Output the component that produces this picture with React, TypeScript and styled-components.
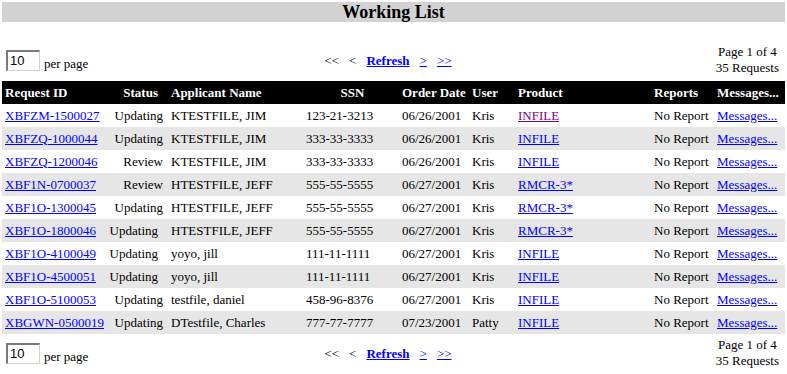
import React from "react";
import styled, { createGlobalStyle } from "styled-components";

const GlobalStyle = createGlobalStyle`
  html, body { margin: 0; padding: 0; background: #fff; }
  body {
    font-family: "Liberation Serif", "Times New Roman", serif;
    font-size: 13px;
    color: #000;
  }
`;

const Page = styled.div`
  padding: 2px 2px 0 2px;
`;

const TitleBar = styled.h1`
  margin: 0;
  height: 20px;
  line-height: 20px;
  background: #d3d3d3;
  text-align: center;
  font-size: 18px;
  font-weight: bold;
`;

const Controls = styled.div<{ $top?: boolean }>`
  box-sizing: border-box;
  display: grid;
  grid-template-columns: 1fr auto 1fr;
  align-items: center;
  height: 38px;
  padding-bottom: 4px;
  margin-top: ${(p) => (p.$top ? "21px" : "2px")};
`;

const PerPage = styled.div`
  display: flex;
  align-items: flex-end;
  gap: 4px;
  padding-left: 4px;
`;

const PerPageLabel = styled.span`
  line-height: 15px;
`;

const PageInput = styled.input`
  box-sizing: border-box;
  width: 34px;
  height: 21px;
  padding: 0 2px;
  margin: 0;
  border-style: solid;
  border-width: 2px 1px 1px 2px;
  border-color: #7a7a7a #d4d0c8 #d4d0c8 #7a7a7a;
  font-family: "Liberation Sans", Arial, sans-serif;
  font-size: 13px;
  color: #000;
  background: #fff;
`;

const Pager = styled.div`
  display: flex;
  align-items: baseline;
  gap: 10px;
  margin-right: 11px;
  padding-top: 2px;
`;

const PagerText = styled.span``;

const PagerLink = styled.a<{ $bold?: boolean }>`
  color: #0000ff;
  text-decoration: underline;
  font-weight: ${(p) => (p.$bold ? "bold" : "normal")};
  cursor: pointer;
`;

const PageInfo = styled.div`
  justify-self: end;
  text-align: center;
  line-height: 16px;
  padding-right: 6px;
`;

const Table = styled.div`
  display: flex;
  flex-direction: column;
`;

const cols = "104px 62px 135px 96px 70px 46px 136px 63px 71px";

const HeaderRow = styled.div`
  display: grid;
  grid-template-columns: ${cols};
  height: 23px;
  align-items: center;
  background: #000;
  color: #fff;
  font-weight: bold;
`;

const Row = styled.div<{ $shade: boolean }>`
  display: grid;
  grid-template-columns: ${cols};
  height: 23px;
  align-items: center;
  background: ${(p) => (p.$shade ? "#e6e6e6" : "#fff")};
`;

const Cell = styled.div<{ $align?: "left" | "right" | "center"; $padRight?: number; $padLeft?: number }>`
  white-space: nowrap;
  overflow: visible;
  text-align: ${(p) => p.$align || "left"};
  padding-left: ${(p) => (p.$padLeft ?? 3)}px;
  padding-right: ${(p) => (p.$padRight ?? 0)}px;
`;

const Link = styled.a<{ $visited?: boolean }>`
  color: ${(p) => (p.$visited ? "#800080" : "#0000ff")};
  text-decoration: underline;
  cursor: pointer;
`;

type Req = {
  id: string;
  status: string;
  statusPad: number;
  name: string;
  ssn: string;
  date: string;
  user: string;
  product: string;
  visited?: boolean;
};

const rows: Req[] = [
  { id: "XBFZM-1500027", status: "Updating", statusPad: 5, name: "KTESTFILE, JIM", ssn: "123-21-3213", date: "06/26/2001", user: "Kris", product: "INFILE", visited: true },
  { id: "XBFZQ-1000044", status: "Updating", statusPad: 5, name: "KTESTFILE, JIM", ssn: "333-33-3333", date: "06/26/2001", user: "Kris", product: "INFILE" },
  { id: "XBFZQ-1200046", status: "Review", statusPad: 5, name: "KTESTFILE, JIM", ssn: "333-33-3333", date: "06/26/2001", user: "Kris", product: "INFILE" },
  { id: "XBF1N-0700037", status: "Review", statusPad: 5, name: "HTESTFILE, JEFF", ssn: "555-55-5555", date: "06/27/2001", user: "Kris", product: "RMCR-3*" },
  { id: "XBF1O-1300045", status: "Updating", statusPad: 5, name: "HTESTFILE, JEFF", ssn: "555-55-5555", date: "06/27/2001", user: "Kris", product: "RMCR-3*" },
  { id: "XBF1O-1800046", status: "Updating", statusPad: 10, name: "HTESTFILE, JEFF", ssn: "555-55-5555", date: "06/27/2001", user: "Kris", product: "RMCR-3*" },
  { id: "XBF1O-4100049", status: "Updating", statusPad: 10, name: "yoyo, jill", ssn: "111-11-1111", date: "06/27/2001", user: "Kris", product: "INFILE" },
  { id: "XBF1O-4500051", status: "Updating", statusPad: 10, name: "yoyo, jill", ssn: "111-11-1111", date: "06/27/2001", user: "Kris", product: "INFILE" },
  { id: "XBF1O-5100053", status: "Updating", statusPad: 5, name: "testfile, daniel", ssn: "458-96-8376", date: "06/27/2001", user: "Kris", product: "INFILE" },
  { id: "XBGWN-0500019", status: "Updating", statusPad: 5, name: "DTestfile, Charles", ssn: "777-77-7777", date: "07/23/2001", user: "Patty", product: "INFILE" },
];

const ControlBar: React.FC<{ top?: boolean }> = ({ top }) => (
  <Controls $top={top}>
    <PerPage>
      <PageInput type="text" defaultValue="10" />
      <PerPageLabel>per page</PerPageLabel>
    </PerPage>
    <Pager>
      <PagerText>&lt;&lt;</PagerText>
      <PagerText>&lt;</PagerText>
      <PagerLink $bold>Refresh</PagerLink>
      <PagerLink>&gt;</PagerLink>
      <PagerLink>&gt;&gt;</PagerLink>
    </Pager>
    <PageInfo>
      Page 1 of 4
      <br />
      35 Requests
    </PageInfo>
  </Controls>
);

export default function App() {
  return (
    <Page>
      <GlobalStyle />
      <TitleBar>Working List</TitleBar>
      <ControlBar top />
      <Table>
        <HeaderRow>
          <Cell>Request ID</Cell>
          <Cell $align="right" $padRight={10}>Status</Cell>
          <Cell>Applicant Name</Cell>
          <Cell $align="center">SSN</Cell>
          <Cell>Order Date</Cell>
          <Cell>User</Cell>
          <Cell>Product</Cell>
          <Cell>Reports</Cell>
          <Cell>Messages...</Cell>
        </HeaderRow>
        {rows.map((r, i) => (
          <Row key={r.id} $shade={i % 2 === 1}>
            <Cell><Link>{r.id}</Link></Cell>
            <Cell $align="right" $padRight={r.statusPad}>{r.status}</Cell>
            <Cell>{r.name}</Cell>
            <Cell>{r.ssn}</Cell>
            <Cell>{r.date}</Cell>
            <Cell>{r.user}</Cell>
            <Cell><Link $visited={r.visited}>{r.product}</Link></Cell>
            <Cell>No Report</Cell>
            <Cell><Link>Messages...</Link></Cell>
          </Row>
        ))}
      </Table>
      <ControlBar />
    </Page>
  );
}
